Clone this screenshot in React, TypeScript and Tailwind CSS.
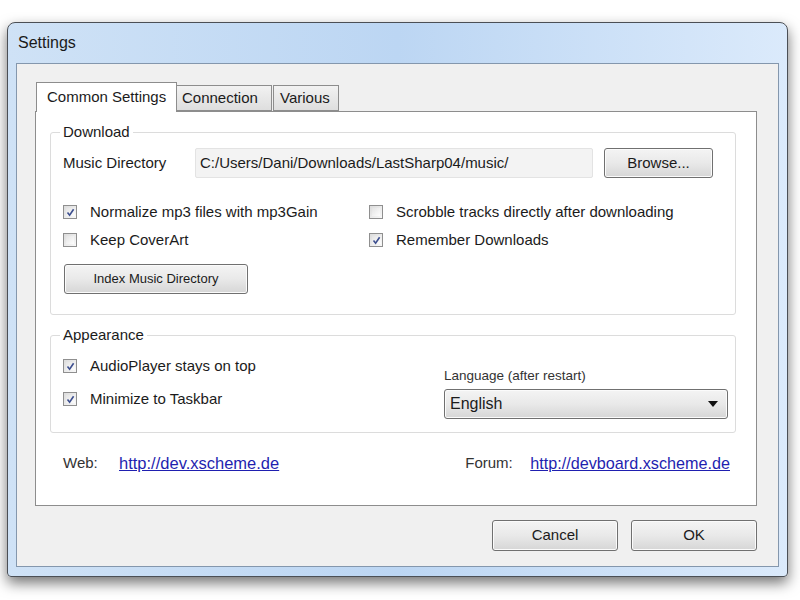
import React from 'react';

const font = { fontFamily: '"Liberation Sans", Arial, sans-serif' };

function Check({ checked }: { checked?: boolean }) {
  return (
    <span className="w-[14px] h-[14px] shrink-0 border border-[#8f8f8f] bg-gradient-to-br from-[#dcdcdc] to-[#f8f8f8] p-[2px] flex">
      <span className="flex-1 bg-gradient-to-br from-[#e4e4e4] to-[#fdfdfd] flex items-center justify-center">
        {checked && (
          <svg width="9" height="9" viewBox="0 0 9 9">
            <path d="M1.5 4.6 L3.6 7.2 L7.6 1.2" fill="none" stroke="#3d4f8f" strokeWidth="1.6" />
          </svg>
        )}
      </span>
    </span>
  );
}

function CheckRow({ label, checked }: { label: string; checked?: boolean }) {
  return (
    <div className="flex items-center gap-[13px] h-[20px]">
      <Check checked={checked} />
      <span>{label}</span>
    </div>
  );
}

function Button({ label, className }: { label: string; className: string }) {
  return (
    <div
      className={`flex items-center justify-center rounded-[3px] border border-[#707070] bg-gradient-to-b from-[#f4f4f4] via-[#e9e9e9] to-[#d6d6d6] shadow-[inset_0_0_0_1px_#fbfbfb] ${className}`}
    >
      {label}
    </div>
  );
}

export default function App() {
  return (
    <div className="w-[800px] h-[600px] bg-white pt-[22px] pl-[7px] text-[15px] text-[#1b1b1b]" style={font}>
      <div className="w-[781px] h-[555px] rounded-t-[8px] rounded-b-[4px] border border-[#4b4f55] bg-gradient-to-r from-[#cfe2f6] via-[#bcd6f3] to-[#dbeafb] shadow-[0_6px_14px_rgba(0,0,0,0.55)] flex flex-col">
        {/* title bar */}
        <div className="h-[40px] flex items-center pl-[10px] text-[16px] text-[#1a1a1a]">Settings</div>
        {/* client area */}
        <div className="flex-1 mx-[8px] mb-[9px] ml-[8px] border border-[#8497ad] bg-[#f0f0f0] flex flex-col px-[18px] pt-[18px]">
          {/* tabs */}
          <div className="flex items-end h-[29px] pl-[1px]">
            <div className="h-[30px] w-[141px] bg-white border border-[#8d8d8d] border-b-0 flex items-center pl-[10px] relative z-10 -mb-[1px]">
              Common Settings
            </div>
            <div className="h-[26px] w-[95px] bg-gradient-to-b from-[#f2f2f2] to-[#dedede] border border-[#8d8d8d] border-l-0 flex items-center pl-[5px]">
              Connection
            </div>
            <div className="h-[26px] w-[66px] ml-[1px] bg-gradient-to-b from-[#f2f2f2] to-[#dedede] border border-[#8d8d8d] flex items-center pl-[6px]">
              Various
            </div>
          </div>
          {/* tab panel */}
          <div className="h-[395px] w-[722px] bg-white border border-[#8d8d8d] pl-[14px] pr-[20px] pt-[11px] flex flex-col">
            <fieldset className="border border-[#dcdcdc] rounded-[3px] pl-[12px] pr-[20px] pb-[20px]">
              <legend className="-ml-[3px] px-[3px] leading-[18px]">Download</legend>
              <div className="flex items-center mt-[7px] h-[30px]">
                <span className="w-[132px]">Music Directory</span>
                <div className="w-[398px] h-[30px] bg-[#f3f3f3] border border-[#e3e3e3] rounded-[2px] flex items-center pl-[4px]">
                  C:/Users/Dani/Downloads/LastSharp04/music/
                </div>
                <Button label="Browse..." className="ml-[11px] w-[109px] h-[30px]" />
              </div>
              <div className="flex mt-[24px]">
                <div className="w-[306px] flex flex-col gap-[8px]">
                  <CheckRow label="Normalize mp3 files with mp3Gain" checked />
                  <CheckRow label="Keep CoverArt" />
                </div>
                <div className="flex flex-col gap-[8px]">
                  <CheckRow label="Scrobble tracks directly after downloading" />
                  <CheckRow label="Remember Downloads" checked />
                </div>
              </div>
              <Button label="Index Music Directory" className="mt-[14px] ml-[1px] w-[184px] h-[30px] text-[13px]" />
            </fieldset>

            <fieldset className="mt-[11px] border border-[#dcdcdc] rounded-[3px] pl-[12px] pr-[7px] pb-[13px]">
              <legend className="-ml-[3px] px-[3px] leading-[18px]">Appearance</legend>
              <div className="flex justify-between">
                <div className="flex flex-col gap-[13px] pt-[12px]">
                  <CheckRow label="AudioPlayer stays on top" checked />
                  <CheckRow label="Minimize to Taskbar" checked />
                </div>
                <div className="w-[284px] flex flex-col pt-[24px]">
                  <span className="text-[13.5px] leading-[16px] text-[#333]">Language (after restart)</span>
                  <div className="mt-[5px] h-[30px] rounded-[3px] border border-[#707070] bg-gradient-to-b from-[#f4f4f4] via-[#e9e9e9] to-[#d6d6d6] shadow-[inset_0_0_0_1px_#fbfbfb] flex items-center justify-between pl-[5px] pr-[9px] text-[16px]">
                    <span>English</span>
                    <svg width="10" height="6" viewBox="0 0 10 6">
                      <path d="M0 0 H10 L5 6 Z" fill="#111" />
                    </svg>
                  </div>
                </div>
              </div>
            </fieldset>

            <div className="flex items-center mt-[18px] pl-[13px] pr-[6px]">
              <span className="w-[56px] text-[#333]">Web:</span>
              <span className="text-[16.5px] text-[#1f1fb0] underline">http://dev.xscheme.de</span>
              <span className="ml-auto w-[65px] text-[#333]">Forum:</span>
              <span className="text-[16.2px] text-[#1f1fb0] underline">http://devboard.xscheme.de</span>
            </div>
          </div>
          {/* bottom buttons */}
          <div className="flex justify-end gap-[13px] mt-[14px] pr-[3px]">
            <Button label="Cancel" className="w-[126px] h-[31px]" />
            <Button label="OK" className="w-[126px] h-[31px]" />
          </div>
        </div>
      </div>
    </div>
  );
}
